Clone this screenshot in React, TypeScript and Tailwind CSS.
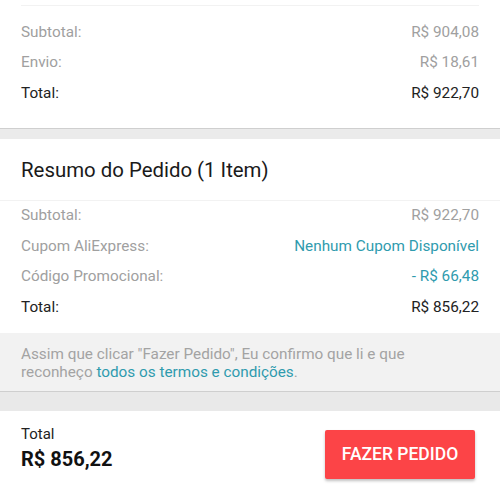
const font = { fontFamily: "Roboto, 'Noto Sans', sans-serif" };

function Row({
  label,
  value,
  strong,
  accent,
}: {
  label: string;
  value: string;
  strong?: boolean;
  accent?: boolean;
}) {
  return (
    <div className="flex h-[30.5px] items-center justify-between text-[15.3px]">
      <span className={strong ? "text-[#222]" : "text-[#a0a0a0]"}>{label}</span>
      <span
        className={
          strong ? "text-[#222]" : accent ? "text-[#2f9bae]" : "text-[#a0a0a0]"
        }
      >
        {value}
      </span>
    </div>
  );
}

function Gap() {
  return <div className="h-[11px] border-t border-[#cfcfcf] bg-[#ebebeb]" />;
}

export default function App() {
  return (
    <div className="w-[500px] h-[497px] overflow-hidden bg-white" style={font}>
      <div className="px-[21px] pt-[5px]">
        <div className="border-t border-[#f2f2f2]" />
        <div className="pt-[11px] pb-[19px]">
          <Row label="Subtotal:" value="R$ 904,08" />
          <Row label="Envio:" value="R$ 18,61" />
          <Row label="Total:" value="R$ 922,70" strong />
        </div>
      </div>
      <Gap />
      <div className="flex h-[61px] items-center px-[21px] pt-[3px] text-[20.4px] text-[#1a1a1a]">
        Resumo do Pedido (1 Item)
      </div>
      <div className="border-t border-[#f2f2f2]" />
      <div className="px-[21px] pb-[10px]">
        <Row label="Subtotal:" value="R$ 922,70" />
        <Row label="Cupom AliExpress:" value="Nenhum Cupom Disponível" accent />
        <Row label="Código Promocional:" value="- R$ 66,48" accent />
        <Row label="Total:" value="R$ 856,22" strong />
      </div>
      <div className="bg-[#f2f2f2] px-[21px] pt-[12px] pb-[10px] text-[15.3px] leading-[18px] text-[#a3a3a3]">
        Assim que clicar "Fazer Pedido", Eu confirmo que li e que
        <br />
        reconheço <span className="text-[#2f9bae]">todos os termos e condições</span>.
      </div>
      <div className="h-[20px] border-t border-[#cfcfcf] bg-[#e9e9e9]" />
      <div className="flex items-start justify-between pl-[21px] pr-[25px] pt-[14px]">
        <div className="flex flex-col">
          <span className="text-[15px] leading-[18px] text-[#222]">Total</span>
          <span className="mt-[4px] text-[20px] font-bold leading-[24px] text-[#111]">
            R$ 856,22
          </span>
        </div>
        <button className="mt-[5px] flex h-[49px] w-[150px] items-center justify-center rounded-[2px] bg-[#fc4447] text-[17.5px] font-medium text-white shadow-[0_2px_3px_rgba(0,0,0,0.25)]">
          FAZER PEDIDO
        </button>
      </div>
    </div>
  );
}
